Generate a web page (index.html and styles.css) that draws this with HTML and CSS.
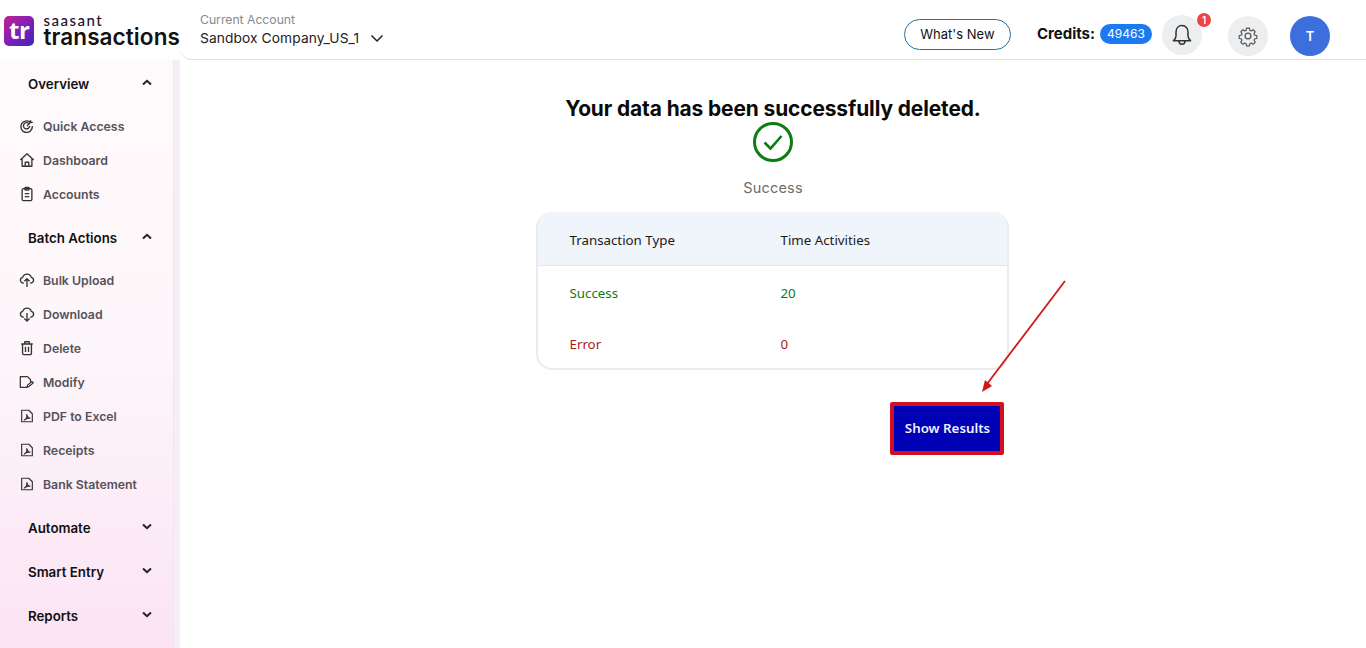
FILE: index.html
```html
<!DOCTYPE html>
<html lang="en">
<head>
<meta charset="utf-8">
<title>SaasAnt Transactions</title>
<link rel="stylesheet" href="styles.css">
</head>
<body>
<div class="app">
  <header class="topbar">
    <div class="brand">
      <div class="logo-tile">tr</div>
      <div class="logo-words">
        <span class="logo-small">saasant</span>
        <span class="logo-big">transactions</span>
      </div>
    </div>
    <div class="header-rest">
      <div class="account">
        <span class="account-label">Current Account</span>
        <span class="account-name">Sandbox Company_US_1
          <svg class="account-chev" width="14" height="9" viewBox="0 0 14 9"><path d="M1.5 1.5 7 7l5.5-5.5" fill="none" stroke="#222" stroke-width="1.5"/></svg>
        </span>
      </div>
      <div class="header-actions">
        <button class="whats-new">What's New</button>
        <div class="credits"><b>Credits:</b><span class="credit-pill">49463</span></div>
        <div class="round-btn bell">
          <svg width="22" height="24" viewBox="0 0 22 24" fill="none" stroke="#333" stroke-width="1.5" stroke-linejoin="round"><path d="M11 2.500c-3.800 0-6 2.900-6 6.500v4c0 1.600-1 3.200-2.600 4.800h17.200C18 16.200 17 14.600 17 13V9c0-3.600-2.200-6.500-6-6.500Z"/><path d="M8 18c0 2 1.300 3.300 3 3.300s3-1.300 3-3.300"/></svg>
          <span class="badge">1</span>
        </div>
        <div class="round-btn gear">
          <svg width="22" height="22" viewBox="0 0 24 24" fill="none" stroke="#555" stroke-width="1.4" stroke-linejoin="round"><circle cx="12" cy="12" r="3.200"/><path d="M10.200 2.500h3.600l.5 2.700 1.700.7 2.300-1.500 2.500 2.500-1.500 2.300.7 1.700 2.700.5v3.600l-2.700.5-.7 1.700 1.500 2.300-2.500 2.500-2.300-1.500-1.700.7-.5 2.700h-3.600l-.5-2.700-1.700-.7-2.300 1.500-2.500-2.500 1.500-2.300-.7-1.700-2.700-.5v-3.600l2.700-.5.7-1.700-1.500-2.300 2.500-2.500 2.300 1.500 1.700-.7Z" transform="translate(1.200 1.200) scale(.9)"/></svg>
        </div>
        <div class="avatar">T</div>
      </div>
    </div>
  </header>

  <div class="body-row">
    <nav class="sidebar">
      <div class="side-inner">
        <div class="group-head">Overview<svg class="caret" width="10" height="7" viewBox="0 0 10 7"><path d="M1 5.500 5 1.800l4 3.700" fill="none" stroke="#222" stroke-width="2"/></svg></div>
        <ul class="items">
          <li><svg class="ico" viewBox="0 0 18 18" fill="none" stroke="#333" stroke-width="1.500"><path d="M13.500 5.500A6.500 6.500 0 1 0 15 9"/><path d="M11 6.300A3.500 3.500 0 1 0 12 9"/><path d="M9 9l5-5M13 2.500V5h2.500"/></svg>Quick Access</li>
          <li><svg class="ico" viewBox="0 0 18 18" fill="none" stroke="#333" stroke-width="1.500" stroke-linejoin="round"><path d="M1.500 9 9 2l7.500 7M3.500 7.500V16h11V7.500"/><path d="M7 16v-4.500h4V16"/></svg>Dashboard</li>
          <li><svg class="ico" viewBox="0 0 18 18" fill="none" stroke="#333" stroke-width="1.500" stroke-linejoin="round"><rect x="3.500" y="3" width="11" height="13.500" rx="1.500"/><rect x="6.500" y="1.500" width="5" height="3" rx="1"/><path d="M6.500 8.500h5M6.500 12h5"/></svg>Accounts</li>
        </ul>
        <div class="group-head">Batch Actions<svg class="caret" width="10" height="7" viewBox="0 0 10 7"><path d="M1 5.500 5 1.800l4 3.700" fill="none" stroke="#222" stroke-width="2"/></svg></div>
        <ul class="items">
          <li><svg class="ico" viewBox="0 0 18 18" fill="none" stroke="#333" stroke-width="1.500" stroke-linejoin="round"><path d="M5.500 12.500H4.500a3.300 3.300 0 0 1-.3-6.500A5 5 0 0 1 13.800 6a3.300 3.300 0 0 1-.3 6.500h-1"/><path d="M9 17V8M6 10.500 9 7.500l3 3"/></svg>Bulk Upload</li>
          <li><svg class="ico" viewBox="0 0 18 18" fill="none" stroke="#333" stroke-width="1.500" stroke-linejoin="round"><path d="M5.500 12.500H4.500a3.300 3.300 0 0 1-.3-6.500A5 5 0 0 1 13.800 6a3.300 3.300 0 0 1-.3 6.500h-1"/><path d="M9 8v9M6 14l3 3 3-3"/></svg>Download</li>
          <li><svg class="ico" viewBox="0 0 18 18" fill="none" stroke="#333" stroke-width="1.500" stroke-linejoin="round"><path d="M2.500 4.500h13M6.500 4.500V2h5v2.500M4 4.500V15a1.500 1.500 0 0 0 1.500 1.500h7A1.500 1.500 0 0 0 14 15V4.500M7.300 7.500v6M10.700 7.500v6"/></svg>Delete</li>
          <li><svg class="ico" viewBox="0 0 18 18" fill="none" stroke="#333" stroke-width="1.400" stroke-linejoin="round"><path d="M9 15H1.500V3h8l3.500 3.500V9"/><path d="M9 15l.6-2.500 5-4 1.500 1.500-5 4Z"/></svg>Modify</li>
          <li><svg class="ico" viewBox="0 0 18 18" fill="none" stroke="#333" stroke-width="1.300" stroke-linejoin="round"><path d="M3 2.500h8l4 4v9H3Z"/><path d="M6 13.500c2-1 3-4 2.700-6 .5 2 1.500 3.500 3.800 4-2-.3-4.500 0-6.500 2Z"/></svg>PDF to Excel</li>
          <li><svg class="ico" viewBox="0 0 18 18" fill="none" stroke="#333" stroke-width="1.300" stroke-linejoin="round"><path d="M3 2.500h8l4 4v9H3Z"/><path d="M6 13.500c2-1 3-4 2.700-6 .5 2 1.500 3.500 3.800 4-2-.3-4.500 0-6.500 2Z"/></svg>Receipts</li>
          <li><svg class="ico" viewBox="0 0 18 18" fill="none" stroke="#333" stroke-width="1.300" stroke-linejoin="round"><path d="M3 2.500h8l4 4v9H3Z"/><path d="M6 13.500c2-1 3-4 2.700-6 .5 2 1.500 3.500 3.800 4-2-.3-4.500 0-6.500 2Z"/></svg>Bank Statement</li>
        </ul>
        <div class="group-head closed">Automate<svg class="caret" width="10" height="7" viewBox="0 0 10 7"><path d="M1 1.500 5 5.200l4-3.700" fill="none" stroke="#222" stroke-width="2"/></svg></div>
        <div class="group-head closed">Smart Entry<svg class="caret" width="10" height="7" viewBox="0 0 10 7"><path d="M1 1.500 5 5.200l4-3.700" fill="none" stroke="#222" stroke-width="2"/></svg></div>
        <div class="group-head closed">Reports<svg class="caret" width="10" height="7" viewBox="0 0 10 7"><path d="M1 1.500 5 5.200l4-3.700" fill="none" stroke="#222" stroke-width="2"/></svg></div>
      </div>
    </nav>

    <main class="content">
      <h1 class="title">Your data has been successfully deleted.</h1>
      <svg class="check" width="40" height="40" viewBox="0 0 40 40" fill="none" stroke="#0c7d10"><circle cx="20" cy="20" r="18.500" stroke-width="3"/><path d="M11.500 20.500 17.500 26.500 28.500 14" stroke-width="2.600"/></svg>
      <p class="status">Success</p>
      <div class="result-card">
        <div class="row head"><span class="c1">Transaction Type</span><span>Time Activities</span></div>
        <div class="row ok"><span class="c1">Success</span><span>20</span></div>
        <div class="row err"><span class="c1">Error</span><span>0</span></div>
      </div>
      <div class="actions"><button class="show-results">Show Results</button></div>
    </main>
  </div>

  <svg class="annotation" width="100" height="125" viewBox="0 0 100 125"><path d="M92 3 14 106" stroke="#d01818" stroke-width="1.800" fill="none"/><path d="M9 114 12 102 19 108Z" fill="#d01818"/></svg>
</div>
</body>
</html>
```

FILE: styles.css
```css
* { box-sizing: border-box; }
html, body { margin: 0; height: 100%; overflow: hidden; }
body { font-family: Inter, "Liberation Sans", sans-serif; background: #fff; color: #111; }
.app { position: relative; width: 1366px; height: 648px; display: flex; flex-direction: column; }

.topbar { height: 60px; display: flex; flex: none; }
.brand { width: 180px; flex: none; display: flex; align-items: center; padding-left: 4px; padding-top: 1px; gap: 9px; }
.logo-tile {
  width: 31px; height: 30px; border-radius: 5px;
  background: linear-gradient(135deg, #c0228f 0%, #8a1fb4 45%, #3d24c0 100%);
  color: #fff; font: 700 24px/27px "Open Sans", sans-serif; text-align: center; letter-spacing: -.5px;
}
.logo-words { display: flex; flex-direction: column; }
.logo-small { font: 500 15px/11px Lato, sans-serif; color: #1a1030; letter-spacing: 1.500px; }
.logo-big { font: 600 22.500px/21px Inter, sans-serif; color: #111; letter-spacing: .1px; white-space: nowrap; }

.header-rest { flex: 1; display: flex; justify-content: space-between; align-items: center; border-bottom: 1px solid #dfe1e3; border-bottom-left-radius: 12px; padding: 0 36px 0 20px; }
.account { display: flex; flex-direction: column; gap: 1px; }
.account-label { font-size: 12.200px; line-height: 16px; color: #8a8a8a; }
.account-name { font-size: 13.750px; line-height: 18px; color: #222; display: flex; align-items: center; gap: 11px; letter-spacing: .1px; }
.header-actions { display: flex; align-items: center; padding-top: 12px; }
.whats-new { width: 107px; height: 31px; border: 1px solid #2a7096; border-radius: 16px; background: #fff; font: 400 13px Inter, sans-serif; color: #111; padding: 0; margin: -3px 26px 0 0; }
.credits { display: flex; align-items: center; gap: 5px; margin: -4px 10px 0 0; font-size: 15px; }
.credits b { font-weight: 700; }
.credit-pill { width: 52px; height: 20px; border-radius: 10px; background: #1b7aef; color: #fff; font-size: 12px; line-height: 20px; text-align: center; }
.round-btn { position: relative; width: 40px; height: 40px; border-radius: 50%; background: #eceef0; display: flex; align-items: center; justify-content: center; }
.bell { margin-right: 26px; margin-top: -2px; }
.gear { margin-right: 22px; }
.badge { position: absolute; top: -2px; right: -9px; width: 14px; height: 14px; border-radius: 50%; background: #ee4444; color: #fff; font-size: 10px; line-height: 14px; font-weight: 600; text-align: center; }
.avatar { width: 40px; height: 40px; border-radius: 50%; background: #3d6fdc; color: #fff; font-size: 13px; font-weight: 600; display: flex; align-items: center; justify-content: center; }

.body-row { flex: 1; display: flex; min-height: 0; }
.sidebar { width: 180px; flex: none; background: #f6eef6; }
.side-inner { width: 174px; height: 100%; padding-top: 2px; border-right: 1px solid #efe7ef; background: linear-gradient(180deg, #fffafa 0%, #fdf6fa 50%, #fbe3f4 100%); }
.group-head { position: relative; height: 44px; display: flex; align-items: center; padding: 0 21px 0 28px; justify-content: space-between; font-size: 13.300px; font-weight: 600; color: #111; }
.group-head .caret { margin-top: -3px; }
.group-head.closed .caret { margin-top: -4px; }
.items { list-style: none; margin: 0 0 5px; padding: 3px 0 0; }
.items li { height: 34px; display: flex; align-items: center; padding-left: 19px; gap: 8px; font-size: 12.300px; font-weight: 600; color: #55525a; }
.ico { width: 16px; height: 16px; flex: none; }

.content { flex: 1; display: flex; flex-direction: column; align-items: center; padding: 36px 0 0; margin-right: 2px; }
.title { margin: 0 0 0 2px; font-size: 20.900px; line-height: 25px; font-weight: 700; color: #0a0a0a; letter-spacing: -.1px; }
.check { margin: 1px 0 0 2px; }
.status { margin: 17px 0 0 2px; font-size: 14.500px; line-height: 18px; color: #6d6d6d; letter-spacing: .2px; }
.result-card { width: 473px; height: 158px; margin-top: 15px; border: 2px solid #e9ebed; border-top: 0; border-radius: 16px; overflow: hidden; font: 400 13.300px "Noto Sans", sans-serif; }
.row { display: flex; align-items: center; padding: 2px 0 0 32px; height: 51px; }
.row .c1 { width: 211px; }
.row.head { height: 54px; background: #f0f4fb; border-bottom: 1px solid #e3e7ec; color: #1a1a1a; }
.row.ok { color: #107c10; }
.row.err { color: #a81c1c; }
.actions { width: 473px; margin-top: 32px; display: flex; justify-content: flex-end; padding-right: 5px; }
.show-results { width: 114px; height: 53px; padding: 0 0 2px 2px; border: 4px solid #d3101f; border-radius: 2px; background: #0000b4; color: #f0f0ff; font: 600 13.300px "Noto Sans", sans-serif; }

.annotation { position: absolute; left: 973px; top: 278px; }
```
